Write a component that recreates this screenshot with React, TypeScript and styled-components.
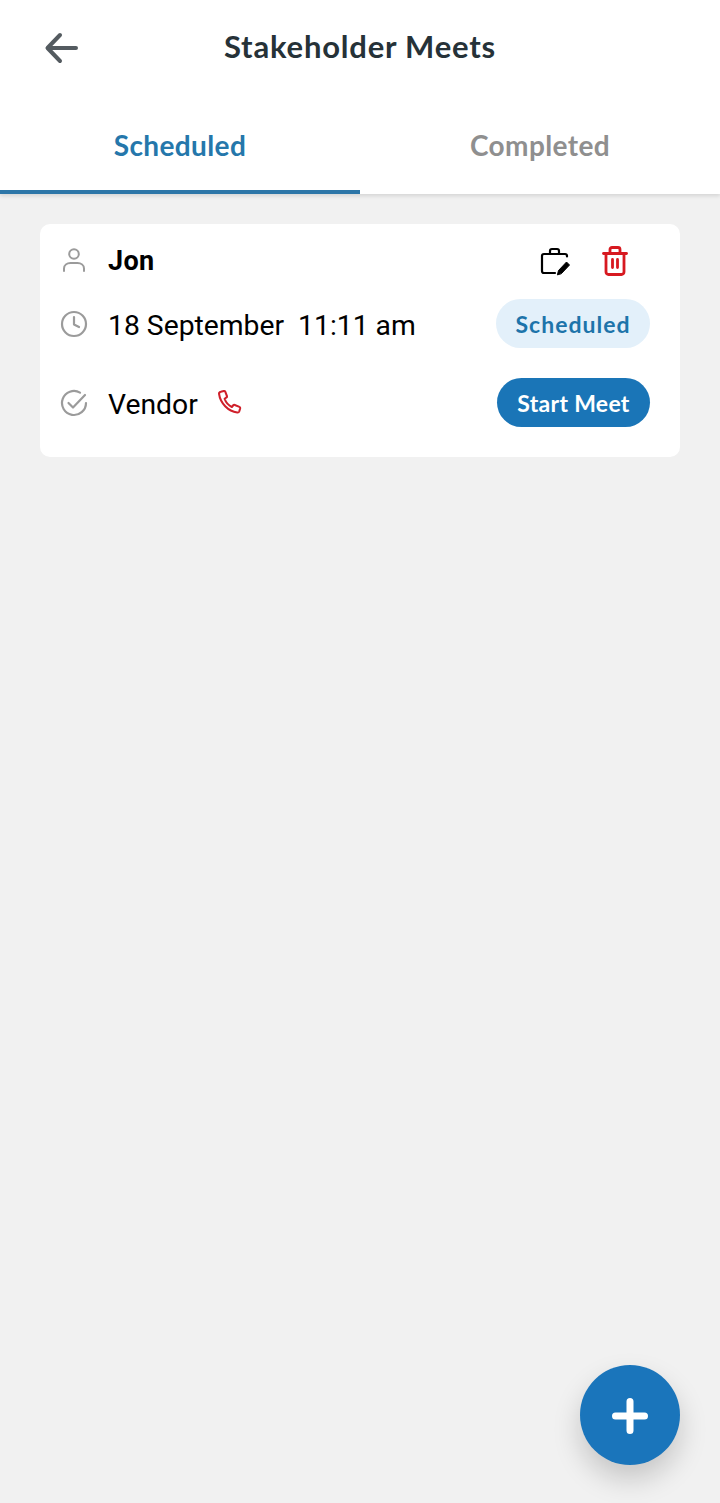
import React from "react";
import styled, { createGlobalStyle } from "styled-components";

const Global = createGlobalStyle`
  html, body { margin: 0; padding: 0; background: #f0f0f0; }
  #root { min-height: 1503px; }
  * { box-sizing: border-box; }
`;

const Page = styled.div`
  position: relative;
  width: 720px;
  height: 1503px;
  background: #f1f1f1;
  font-family: Roboto, "Liberation Sans", sans-serif;
  overflow: hidden;
`;

const TopPanel = styled.header`
  background: #fff;
  box-shadow: 0 2px 4px rgba(0, 0, 0, 0.12);
`;

const TitleBar = styled.div`
  height: 96px;
  padding-bottom: 4px;
  display: flex;
  align-items: center;
  justify-content: center;
  position: relative;
`;

const BackButton = styled.div`
  position: absolute;
  left: 44px;
  top: 31px;
  width: 36px;
  height: 34px;
  display: flex;
`;

const Title = styled.h1`
  margin: 0;
  font: 700 31px/36px Lato, "Liberation Sans", sans-serif;
  color: #263238;
  letter-spacing: 0.8px;
`;

const Tabs = styled.nav`
  height: 98px;
  display: grid;
  grid-template-columns: 1fr 1fr;
`;

const Tab = styled.div<{ $active?: boolean }>`
  display: flex;
  align-items: center;
  justify-content: center;
  padding-top: 3px;
  font: 700 28px/32px Lato, "Liberation Sans", sans-serif;
  letter-spacing: 0.38px;
  color: ${(p) => (p.$active ? "#2577ab" : "#8f8f8f")};
  border-bottom: 4px solid ${(p) => (p.$active ? "#2d76a8" : "transparent")};
`;

const Content = styled.main`
  padding: 30px 40px 0;
`;

const Card = styled.section`
  background: #fff;
  border-radius: 10px;
  height: 233px;
  padding: 20px 30px 30px 20px;
  display: flex;
  flex-direction: column;
`;

const Row = styled.div<{ $height: number; $top?: number }>`
  height: ${(p) => p.$height}px;
  margin-top: ${(p) => p.$top ?? 0}px;
  display: flex;
  align-items: center;
`;

const LeadIcon = styled.div`
  width: 28px;
  height: 28px;
  margin-right: 20px;
  flex: none;
  display: flex;
`;

const Name = styled.span`
  font: 700 27px/32px Roboto, "Liberation Sans", sans-serif;
  letter-spacing: 0.3px;
  color: #000;
  flex: 1;
`;

const BodyText = styled.span<{ $grow?: boolean }>`
  font: 400 28.300px/34px Roboto, "Liberation Sans", sans-serif;
  color: #000;
  white-space: pre;
  margin-top: 5px;
  flex: ${(p) => (p.$grow ? 1 : "none")};
`;

const Actions = styled.div`
  display: flex;
  align-items: center;
  gap: 32px;
  margin-right: 22px;
`;

const BriefcaseIcon = styled.svg`
  margin-left: -2px;
`;

const Pill = styled.div<{ $solid?: boolean }>`
  width: ${(p) => (p.$solid ? 153 : 154)}px;
  height: 49px;
  border-radius: 25px;
  display: flex;
  align-items: center;
  justify-content: center;
  font: 700 23px/28px Lato, "Liberation Sans", sans-serif;
  letter-spacing: ${(p) => (p.$solid ? 0.3 : 1)}px;
  background: ${(p) => (p.$solid ? "#1a75b7" : "#e3f0fa")};
  color: ${(p) => (p.$solid ? "#fff" : "#1d74aa")};
`;

const PhoneSlot = styled.div`
  width: 26px;
  height: 26px;
  margin-left: 19px;
  margin-top: -2px;
  display: flex;
`;

const Spacer = styled.div`
  flex: 1;
`;

const Fab = styled.button`
  position: absolute;
  left: 580px;
  top: 1365px;
  width: 100px;
  height: 100px;
  border: 0;
  padding: 0;
  border-radius: 50%;
  background: #1a75bb;
  box-shadow: 0 14px 28px rgba(0, 0, 0, 0.18);
  display: flex;
  align-items: center;
  justify-content: center;
`;

const FabIcon = styled.svg`
  margin: 2px 0 0 0;
`;

const grey = "#9b9b9b";

export default function App() {
  return (
    <Page>
      <Global />
      <TopPanel>
        <TitleBar>
          <BackButton>
            <svg width="36" height="34" viewBox="0 0 36 34" fill="none" stroke="#545b60" strokeWidth="4" strokeLinecap="round" strokeLinejoin="round">
              <path d="M32 17H4M16 4 3.500 17 16 30" />
            </svg>
          </BackButton>
          <Title>Stakeholder Meets</Title>
        </TitleBar>
        <Tabs>
          <Tab $active>Scheduled</Tab>
          <Tab>Completed</Tab>
        </Tabs>
      </TopPanel>
      <Content>
        <Card>
          <Row $height={34}>
            <LeadIcon>
              <svg width="28" height="28" viewBox="0 0 28 28" fill="none" stroke={grey} strokeWidth="2" strokeLinecap="round">
                <circle cx="14" cy="7" r="4.800" />
                <path d="M4 24v-2.500C4 18 7 16 10.500 16h7c3.500 0 6.500 2 6.500 5.500V24" />
              </svg>
            </LeadIcon>
            <Name>Jon</Name>
            <Actions>
              <BriefcaseIcon width="30" height="30" viewBox="0 0 30 30" fill="none" stroke="#000" strokeWidth="2.200" strokeLinecap="round" strokeLinejoin="round">
                <path d="M27 10.500V10a2 2 0 0 0-2-2H4a2 2 0 0 0-2 2v15a2 2 0 0 0 2 2h11" />
                <path d="M10 8V5a2 2 0 0 1 2-2h5a2 2 0 0 1 2 2v3" />
                <path d="M17.500 28.500l1-4 8-8.500 3 3-8 8.500z" fill="#000" strokeWidth="1" />
              </BriefcaseIcon>
              <svg width="26" height="30" viewBox="0 0 26 30" fill="none" stroke="#d71920" strokeWidth="2.800" strokeLinecap="round" strokeLinejoin="round">
                <path d="M1.500 7.500h23" />
                <path d="M8 7V3.500A2 2 0 0 1 10 1.500h6a2 2 0 0 1 2 2V7" />
                <path d="M4 8v18a2.500 2.500 0 0 0 2.500 2.500h13A2.500 2.500 0 0 0 22 26V8" />
                <path d="M10.500 13.500v8M15.500 13.500v8" />
              </svg>
            </Actions>
          </Row>
          <Row $height={49} $top={21}>
            <LeadIcon>
              <svg width="28" height="28" viewBox="0 0 28 28" fill="none" stroke={grey} strokeWidth="2.200" strokeLinecap="round" strokeLinejoin="round">
                <circle cx="14" cy="14" r="12" />
                <path d="M14 7v7.500l5 2.500" />
              </svg>
            </LeadIcon>
            <BodyText $grow>18 September  11:11 am</BodyText>
            <Pill>Scheduled</Pill>
          </Row>
          <Row $height={49} $top={30}>
            <LeadIcon>
              <svg width="28" height="28" viewBox="0 0 28 28" fill="none" stroke={grey} strokeWidth="2.200" strokeLinecap="round" strokeLinejoin="round">
                <path d="M26 14a12 12 0 1 1-6-10.400" />
                <path d="M8.500 14l4.500 4.500L25 6" />
              </svg>
            </LeadIcon>
            <BodyText>Vendor</BodyText>
            <PhoneSlot>
              <svg width="26" height="26" viewBox="0 0 24 24" fill="none" stroke="#cf1f2a" strokeWidth="1.900" strokeLinecap="round" strokeLinejoin="round">
                <path d="M3.500 2.500 6.300 1.800c.6-.1 1.100.2 1.300.7l1.600 4c.2.500 0 1-.4 1.300L7 9c1 2.800 3.800 6.300 6.700 7.600l1.300-1.600c.4-.4.900-.5 1.400-.3l4.300 1.800c.6.200.8.800.7 1.300l-.8 2.700c-.3.900-1 1.300-1.900 1.200C10.300 20.800 3 13 1.900 4.600c-.1-1 .6-1.900 1.600-2.100z" />
              </svg>
            </PhoneSlot>
            <Spacer />
            <Pill $solid>Start Meet</Pill>
          </Row>
        </Card>
      </Content>
      <Fab aria-label="Add">
        <FabIcon width="36" height="36" viewBox="0 0 36 36" fill="none" stroke="#fff" strokeWidth="7" strokeLinecap="round">
          <path d="M18 3.500v29M3.500 18h29" />
        </FabIcon>
      </Fab>
    </Page>
  );
}
